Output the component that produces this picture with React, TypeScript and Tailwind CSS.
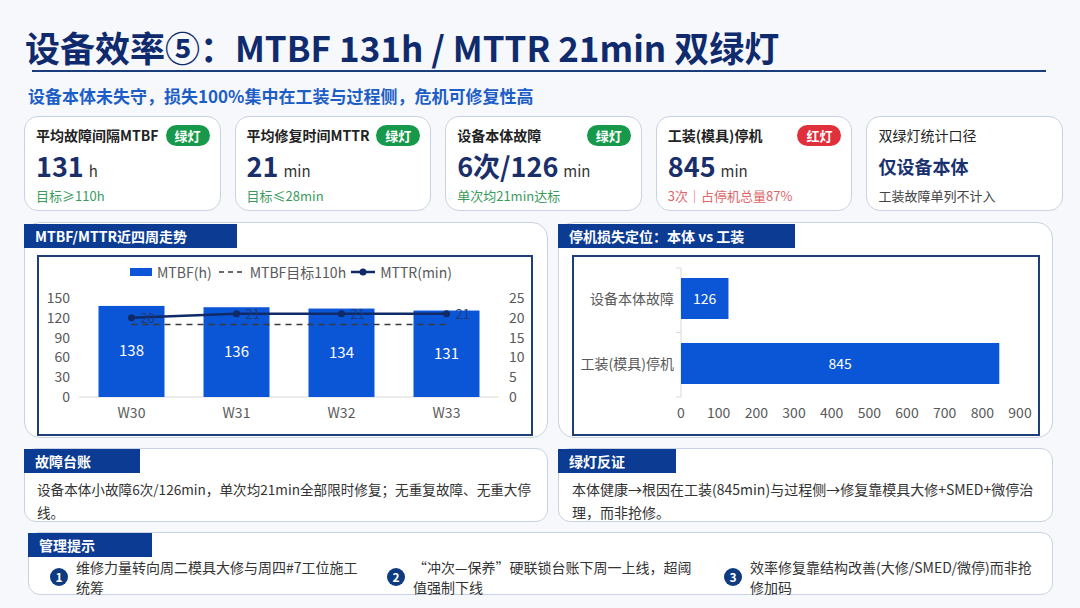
// 设备效率看板：MTBF / MTTR 双绿灯
import React from 'react'

const kpis = [
  { title: '平均故障间隔MTBF', badge: 'green', value: '131', unit: 'h', sub: '目标≥110h', subTone: 'green' },
  { title: '平均修复时间MTTR', badge: 'green', value: '21', unit: 'min', sub: '目标≤28min', subTone: 'green' },
  { title: '设备本体故障', badge: 'green', value: '6次/126', unit: 'min', sub: '单次均21min达标', subTone: 'green' },
  { title: '工装(模具)停机', badge: 'red', value: '845', unit: 'min', sub: '3次｜占停机总量87%', subTone: 'red' },
]

const weeks = [
  { w: 'W30', mtbf: 138, mttr: 20 },
  { w: 'W31', mtbf: 136, mttr: 21 },
  { w: 'W32', mtbf: 134, mttr: 21 },
  { w: 'W33', mtbf: 131, mttr: 21 },
]

const tips = [
  '维修力量转向周二模具大修与周四#7工位施工统筹',
  '“冲次—保养”硬联锁台账下周一上线，超阈值强制下线',
  '效率修复靠结构改善(大修/SMED/微停)而非抢修加码',
]

function Badge({ tone }: { tone: string }) {
  return (
    <span
      className={`h-[21px] px-[9px] rounded-full text-white text-[13px] font-bold leading-[21px] ${
        tone === 'red' ? 'bg-[#e0303c]' : 'bg-[#17994b]'
      }`}
    >
      {tone === 'red' ? '红灯' : '绿灯'}
    </span>
  )
}

function Tab({ label, w }: { label: string; w: string }) {
  return (
    <div className={`${w} h-[24px] bg-[#0b3b93] text-white text-[14px] font-bold leading-[24px] pl-[11px] -ml-px`}>
      {label}
    </div>
  )
}

// Graphique barres + ligne (origine locale = x 39, y 287)
function TrendChart() {
  const y0 = 110
  const k = 99 / 150
  const kr = 99 / 25
  const cx = (i: number) => 92.5 + i * 105
  const pts = weeks.map((d, i) => `${cx(i)},${y0 - d.mttr * kr}`).join(' ')
  return (
    <svg width="492" height="147" className="block">
      <line x1="40" y1={y0} x2="460" y2={y0} stroke="#d9d9d9" strokeWidth="1" />
      {[0, 30, 60, 90, 120, 150].map((v) => (
        <text key={v} x="31" y={y0 - v * k + 5} textAnchor="end" fontSize="14" fill="#595959">
          {v}
        </text>
      ))}
      {[0, 5, 10, 15, 20, 25].map((v) => (
        <text key={v} x="470" y={y0 - v * kr + 5} fontSize="14" fill="#595959">
          {v}
        </text>
      ))}
      {weeks.map((d, i) => (
        <g key={d.w}>
          <rect x={cx(i) - 33} y={y0 - d.mtbf * k} width="66" height={d.mtbf * k} fill="#0b56d6" />
          <text x={cx(i)} y={y0 - (d.mtbf * k) / 2 + 5} textAnchor="middle" fontSize="15" fill="#ffffff">
            {d.mtbf}
          </text>
          <text x={cx(i)} y="131" textAnchor="middle" fontSize="14" fill="#595959">
            {d.w}
          </text>
        </g>
      ))}
      <line x1={cx(0)} y1={y0 - 110 * k} x2={cx(3)} y2={y0 - 110 * k} stroke="#3a3a3a" strokeWidth="1.5" strokeDasharray="6 5" />
      <polyline points={pts} fill="none" stroke="#0f2a66" strokeWidth="2.5" />
      {weeks.map((d, i) => (
        <g key={d.w}>
          <circle cx={cx(i)} cy={y0 - d.mttr * kr} r="3.5" fill="#0f2a66" />
          <text x={cx(i) + 9} y={y0 - d.mttr * kr + 5} fontSize="13" fill="#1d3b78">
            {d.mttr}
          </text>
        </g>
      ))}
    </svg>
  )
}

// Barres horizontales (origine locale = x 574, y 257)
function LossChart() {
  const x0 = 107
  const k = 339 / 900
  return (
    <svg width="464" height="177" className="block">
      <line x1={x0} y1="11" x2={x0} y2="140" stroke="#d9d9d9" strokeWidth="1" />
      {[11, 75.5, 140].map((y) => (
        <line key={y} x1={x0 - 5} y1={y} x2={x0} y2={y} stroke="#d9d9d9" strokeWidth="1" />
      ))}
      <rect x={x0} y="21" width={126 * k} height="41" fill="#0b56d6" />
      <text x={x0 + (126 * k) / 2} y="47" textAnchor="middle" fontSize="14" fill="#ffffff">126</text>
      <rect x={x0} y="86" width={845 * k} height="41" fill="#0b56d6" />
      <text x={x0 + (845 * k) / 2} y="112" textAnchor="middle" fontSize="14" fill="#ffffff">845</text>
      <text x="100" y="46.5" textAnchor="end" fontSize="14" fill="#595959">设备本体故障</text>
      <text x="100" y="111.5" textAnchor="end" fontSize="14" fill="#595959">工装(模具)停机</text>
      {[0, 100, 200, 300, 400, 500, 600, 700, 800, 900].map((v) => (
        <text key={v} x={x0 + v * k} y="161" textAnchor="middle" fontSize="14" fill="#595959">
          {v}
        </text>
      ))}
    </svg>
  )
}

export default function App() {
  return (
    <div className="w-[1080px] h-[608px] overflow-hidden bg-[#f6f8fc] font-['Noto_Sans_CJK_SC','Noto_Sans',sans-serif] text-[#222]">
      {/* En-tête */}
      <h1 className="pl-[25px] pt-[28px] text-[35px] font-bold leading-[38px] text-[#0f2b6d] whitespace-nowrap">
        设备效率⑤：MTBF 131h / MTTR 21min 双绿灯
      </h1>
      <div className="ml-[32px] mt-[4px] w-[1014px] h-[2px] bg-[#1b3d7c]" />
      <p className="ml-[28px] mt-[13px] text-[17px] font-bold leading-[22px] text-[#1d5ec6]">
        设备本体未失守，损失100%集中在工装与过程侧，危机可修复性高
      </p>

      {/* Cartes KPI */}
      <div className="ml-[24px] mt-[9px] w-[1039px] h-[95px] grid grid-cols-5 gap-[14px]">
        {kpis.map((c) => (
          <div key={c.title} className="rounded-[14px] border border-[#c8d2e4] bg-white pl-[11px] pr-[10px] pt-[7px]">
            <div className="h-[22px] flex items-center justify-between">
              <span className="text-[14px] font-bold text-[#222]">{c.title}</span>
              <Badge tone={c.badge} />
            </div>
            <div className="mt-[5px] h-[30px] flex items-baseline gap-[5px] leading-[30px]">
              <span className="text-[27px] font-bold text-[#1a2f6a]">{c.value}</span>
              <span className="text-[15px] text-[#333]">{c.unit}</span>
            </div>
            <div className={`mt-[5px] text-[13px] leading-[20px] ${c.subTone === 'red' ? 'text-[#e0666a]' : 'text-[#3a9a5c]'}`}>
              {c.sub}
            </div>
          </div>
        ))}
        <div className="rounded-[14px] border border-[#c8d2e4] bg-white pl-[11px] pr-[10px] pt-[7px]">
          <div className="h-[22px] flex items-center text-[14px] text-[#222]">双绿灯统计口径</div>
          <div className="mt-[5px] h-[30px] flex items-center text-[18px] font-bold text-[#1a3170]">仅设备本体</div>
          <div className="mt-[5px] text-[13px] leading-[20px] text-[#444]">工装故障单列不计入</div>
        </div>
      </div>

      {/* Graphiques */}
      <div className="ml-[24px] mt-[11px] flex gap-[10px]">
        <div className="w-[524px] h-[216px] rounded-[16px] border border-[#c8d2e4] bg-white pt-px">
          <Tab label="MTBF/MTTR近四周走势" w="w-[213px]" />
          <div className="ml-[12px] mt-[7px] w-[496px] h-[181px] border-2 border-[#1d3e78] bg-white">
            <div className="h-[30px] pl-[12px] flex items-center justify-center gap-[5px] text-[14px] text-[#595959] whitespace-nowrap">
              <span className="w-[22px] h-[8px] bg-[#0b56d6]" />
              <span>MTBF(h)</span>
              <svg width="26" height="4" className="ml-[2px]">
                <line x1="0" y1="2" x2="26" y2="2" stroke="#3a3a3a" strokeWidth="1.5" strokeDasharray="5 4" />
              </svg>
              <span>MTBF目标110h</span>
              <svg width="24" height="8">
                <line x1="0" y1="4" x2="24" y2="4" stroke="#0f2a66" strokeWidth="2.5" />
                <circle cx="12" cy="4" r="3.5" fill="#0f2a66" />
              </svg>
              <span>MTTR(min)</span>
            </div>
            <TrendChart />
          </div>
        </div>
        <div className="w-[495px] h-[216px] rounded-[16px] border border-[#c8d2e4] bg-white pt-px">
          <Tab label="停机损失定位：本体 vs 工装" w="w-[237px]" />
          <div className="ml-[13px] mt-[7px] w-[468px] h-[181px] border-2 border-[#1d3e78] bg-white">
            <LossChart />
          </div>
        </div>
      </div>

      {/* Constats */}
      <div className="ml-[24px] mt-[10px] flex gap-[10px]">
        <div className="w-[524px] h-[74px] rounded-[12px] border border-[#c8d2e4] bg-white">
          <Tab label="故障台账" w="w-[116px]" />
          <p className="pl-[12px] pr-[8px] mt-[5px] text-[13.6px] leading-[23px] text-[#333]">
            设备本体小故障6次/126min，单次均21min全部限时修复；无重复故障、无重大停线。
          </p>
        </div>
        <div className="w-[495px] h-[74px] rounded-[12px] border border-[#c8d2e4] bg-white">
          <Tab label="绿灯反证" w="w-[118px]" />
          <p className="px-[13px] mt-[5px] text-[14px] leading-[23px] text-[#333]">
            本体健康→根因在工装(845min)与过程侧→修复靠模具大修+SMED+微停治理，而非抢修。
          </p>
        </div>
      </div>

      {/* Pistes de gestion */}
      <div className="ml-[28px] mt-[10px] w-[1025px] h-[63px] rounded-[12px] border border-[#c8d2e4] bg-white">
        <Tab label="管理提示" w="w-[124px]" />
        <div className="pl-[21px] grid grid-cols-[308px_308px_308px] gap-x-[29px]">
          {tips.map((t, i) => (
            <div key={i} className="flex items-center gap-[8px]">
              <span className="w-[18px] h-[18px] shrink-0 rounded-full bg-[#0e3a80] text-white text-[12px] font-bold leading-[18px] text-center">
                {i + 1}
              </span>
              <span className="w-[282px] text-[14px] leading-[20px] text-[#333]">{t}</span>
            </div>
          ))}
        </div>
      </div>
    </div>
  )
}
